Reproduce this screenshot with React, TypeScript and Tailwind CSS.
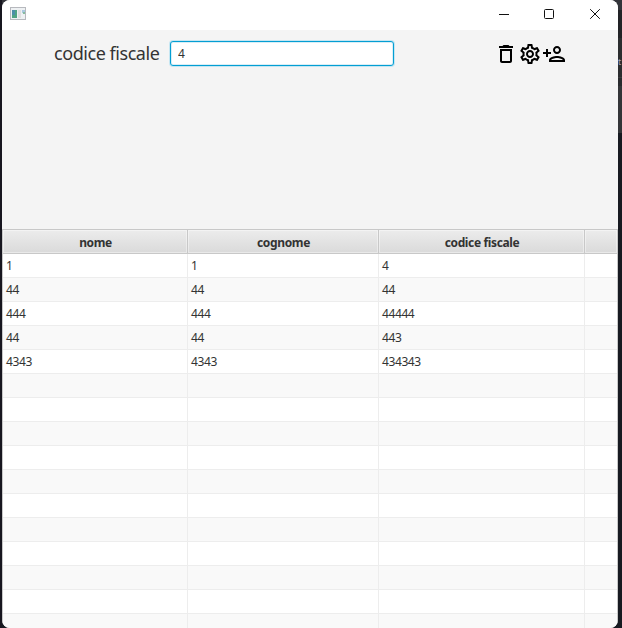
import React from "react";
import { MdDeleteOutline, MdOutlineSettings } from "react-icons/md";

const people = [
  ["1", "1", "4"],
  ["44", "44", "44"],
  ["444", "444", "44444"],
  ["44", "44", "443"],
  ["4343", "4343", "434343"],
];
const rows = Array.from({ length: 16 }, (_, i) => people[i] ?? ["", "", ""]);

function TitleBar() {
  return (
    <header className="flex h-[30px] shrink-0 items-start bg-white">
      <svg className="mt-[7px] ml-2 h-[13px] w-4" viewBox="0 0 16 13" shapeRendering="crispEdges">
        <rect width="16" height="13" fill="#b7b9be" />
        <rect x="1" y="1" width="14" height="11" fill="#eef1f3" />
        <rect x="2" y="3" width="5" height="8" fill="#4fa384" />
        <rect x="2" y="3" width="3" height="5" fill="#4c8ea8" />
        <rect x="8" y="3" width="3" height="8" fill="#dfdfe0" />
        <rect x="12" y="3" width="3" height="3" fill="#a9c8e0" />
        <rect x="13" y="5" width="2" height="2" fill="#86bba0" />
      </svg>
      <div className="flex-1" />
      <svg className="h-[30px] w-[138px]" viewBox="0 0 138 30" fill="none" stroke="#111">
        <path d="M19 14.5h10" shapeRendering="crispEdges" />
        <rect x="64.5" y="9.5" width="9" height="9" rx="1" />
        <path d="M110.2 9.2l9.6 9.6M119.8 9.2l-9.6 9.6" />
      </svg>
    </header>
  );
}

function PersonAdd() {
  return (
    <svg className="size-6" viewBox="0 0 24 24" fill="currentColor">
      <path d="M15 12c2.21 0 4-1.79 4-4s-1.79-4-4-4-4 1.79-4 4 1.79 4 4 4zm0-6c1.1 0 2 .9 2 2s-.9 2-2 2-2-.9-2-2 .9-2 2-2zm0 8c-2.67 0-8 1.34-8 4v2h16v-2c0-2.66-5.33-4-8-4zm-6 4c.22-.72 3.31-2 6-2 2.7 0 5.8 1.29 6 2H9zm-3-3v-3h3v-2H6V7H4v3H1v2h3v3z" />
    </svg>
  );
}

function Heading({ children, width }: { children?: React.ReactNode; width: string }) {
  return (
    <div className={`${width} shrink-0 border-r border-b border-[#c8c8c8]`}>
      <div className="flex h-full items-center justify-center border border-white/40 pt-[3px] pl-px text-[12px] leading-4 font-bold tracking-[-0.36px] text-[#333]">{children}</div>
    </div>
  );
}

export default function App() {
  return (
    <div className="flex h-[628px] w-[622px] overflow-hidden bg-[linear-gradient(to_bottom,#33343a_0,#33343a_10px,#222326_10px,#222326_38px,#2b2d2f_38px,#2b2d2f_77px,#3a3b3d_77px,#3a3b3d_78px,#292b2e_78px,#292b2e_86px,#333538_86px,#333538_133px,#171a21_133px)] font-['Noto_Sans','Open_Sans',sans-serif] text-[#333]">
      <div className="w-0.5 shrink-0 bg-[#17161f]" />
      <div className="flex w-[616px] shrink-0 flex-col overflow-hidden rounded-lg bg-[#f4f4f4]">
        <TitleBar />
        <section className="flex h-[199px] shrink-0 items-start">
          <label htmlFor="cf" className="mt-2.5 ml-[52px] w-[116px] text-[18px] leading-[26px] tracking-[-0.45px] whitespace-nowrap">codice fiscale</label>
          <input
            id="cf"
            defaultValue="4"
            className="mt-[11px] h-[25px] w-[224px] rounded-[3px] border border-[#039ed3] bg-white px-[7px] text-[12px] shadow-[0_0_0_1px_#c5e6f2,inset_0_0_0_1px_#d9eef6] outline-none"
          />
          <div className="mt-3 ml-[100px] flex text-2xl text-black">
            <MdDeleteOutline />
            <MdOutlineSettings />
            <PersonAdd />
          </div>
        </section>
        <main className="flex min-h-0 flex-1 flex-col border-t border-r border-l border-[#c8c8c8]">
          <div className="flex h-6 shrink-0 bg-linear-to-b from-[#ececec] to-[#d9d9d9]">
            <Heading width="w-[185px]">nome</Heading>
            <Heading width="w-[191px]">cognome</Heading>
            <Heading width="w-[206px]">codice fiscale</Heading>
            <div className="flex-1 border-b border-[#c8c8c8]">
              <div className="h-full border border-white/40" />
            </div>
          </div>
          {rows.map((row, i) => (
            <div key={i} className="flex h-6 shrink-0 border-b border-[#ededed] text-[12px] leading-6 tracking-[-0.4px] even:bg-white odd:bg-[#f9f9f9]">
              <div className="w-[185px] border-r border-[#ededed] pl-[3px]">{row[0]}</div>
              <div className="w-[191px] border-r border-[#ededed] pl-[3px]">{row[1]}</div>
              <div className="w-[206px] border-r border-[#ededed] pl-[3px]">{row[2]}</div>
            </div>
          ))}
        </main>
      </div>
      <div className="w-1 shrink-0 pt-[56px] text-[9px] leading-3 text-[#a6a0b8]">t</div>
    </div>
  );
}
